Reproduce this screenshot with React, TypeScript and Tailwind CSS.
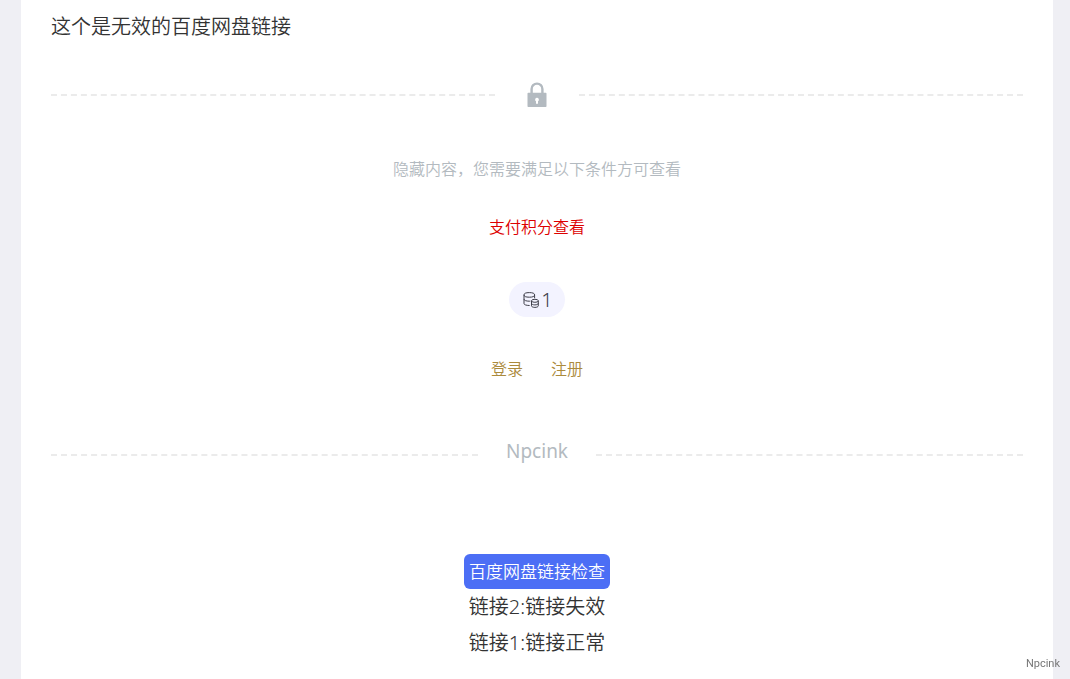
const LockIcon = () => (
  <svg className="w-5 h-[26px] shrink-0" viewBox="0 0 20 26" aria-hidden="true">
    <path
      d="M4.6 11.5V7a5.4 5.4 0 0 1 10.8 0v4.5"
      fill="none"
      stroke="#b3bac0"
      strokeWidth="2.4"
    />
    <path
      fillRule="evenodd"
      fill="#b3bac0"
      d="M1.3 10.7h17.4a.8.8 0 0 1 .8.8v12.7a.8.8 0 0 1-.8.8H1.3a.8.8 0 0 1-.8-.8V11.5a.8.8 0 0 1 .8-.8ZM10 15.8a1.9 1.9 0 0 0-1 3.5v2.5h2v-2.5a1.9 1.9 0 0 0-1-3.5Z"
    />
  </svg>
);

const CoinsIcon = () => (
  <svg
    className="w-4 h-4 shrink-0"
    viewBox="0 0 16 16"
    fill="none"
    stroke="#3f3f4a"
    strokeWidth="1"
    aria-hidden="true"
  >
    <ellipse cx="6.3" cy="2.9" rx="5.3" ry="2.3" />
    <path d="M1 2.9v8.6c0 1.2 2.2 2 5.6 2M11.6 2.9v3.3M1 7.2c0 1.2 2.3 2 5.3 2h1" />
    <ellipse cx="11.9" cy="8.8" rx="3.4" ry="1.5" />
    <path d="M8.5 8.8v5c0 .9 1.5 1.6 3.4 1.6s3.4-.7 3.4-1.6v-5M8.5 11.3c0 .9 1.5 1.6 3.4 1.6s3.4-.7 3.4-1.6" />
  </svg>
);

const Dash = () => (
  <span className="flex-1 border-t-2 border-dashed border-[#ebebeb]"></span>
);

const App = () => {
  return (
    <div className="min-h-screen flex bg-[#efeff4] pl-[21px] pr-[17px] font-['Noto_Sans','Noto_Sans_CJK_SC',sans-serif] font-[350] text-[#333333]">
      <main className="flex-1 bg-white px-[30px] pt-[9px]">
        <p className="text-xl leading-9">这个是无效的百度网盘链接</p>

        <section className="pt-[37px] text-center">
          <div className="flex items-center gap-8">
            <Dash />
            <LockIcon />
            <Dash />
          </div>
          <p className="mt-[49px] text-base leading-6 text-[#b3bac0]">
            隐藏内容，您需要满足以下条件方可查看
          </p>
          <p className="mt-[34px] text-base leading-6 text-[#dd0000]">
            支付积分查看
          </p>
          <div className="mt-[43px] flex justify-center">
            <span className="flex items-center gap-0.5 h-[35px] pl-3.5 pr-3 rounded-full bg-[#f3f3ff] text-xl font-light text-[#3f3f4a]">
              <CoinsIcon />
              <span>1</span>
            </span>
          </div>
          <div className="mt-10 flex justify-center gap-7 text-base leading-6 text-[#ab8a3c]">
            <a href="#">登录</a>
            <a href="#">注册</a>
          </div>
          <div className="mt-14 flex items-center gap-7">
            <Dash />
            <span className="pb-2 text-[19px] leading-7 font-normal text-[#b3bac0]">
              Npcink
            </span>
            <Dash />
          </div>
        </section>

        <section className="pt-[81px] flex flex-col items-center">
          <button
            type="button"
            className="h-[35px] px-[5px] rounded-md bg-[#4c6ef5] text-[17px] text-white"
          >
            百度网盘链接检查
          </button>
          <p className="text-xl leading-9">链接2:链接失效</p>
          <p className="text-xl leading-9">链接1:链接正常</p>
        </section>
      </main>
      <span className="fixed right-2.5 bottom-[7px] text-[11px] leading-4 font-normal font-[Roboto,sans-serif] text-[#777777]">
        Npcink
      </span>
    </div>
  );
};

export default App;
